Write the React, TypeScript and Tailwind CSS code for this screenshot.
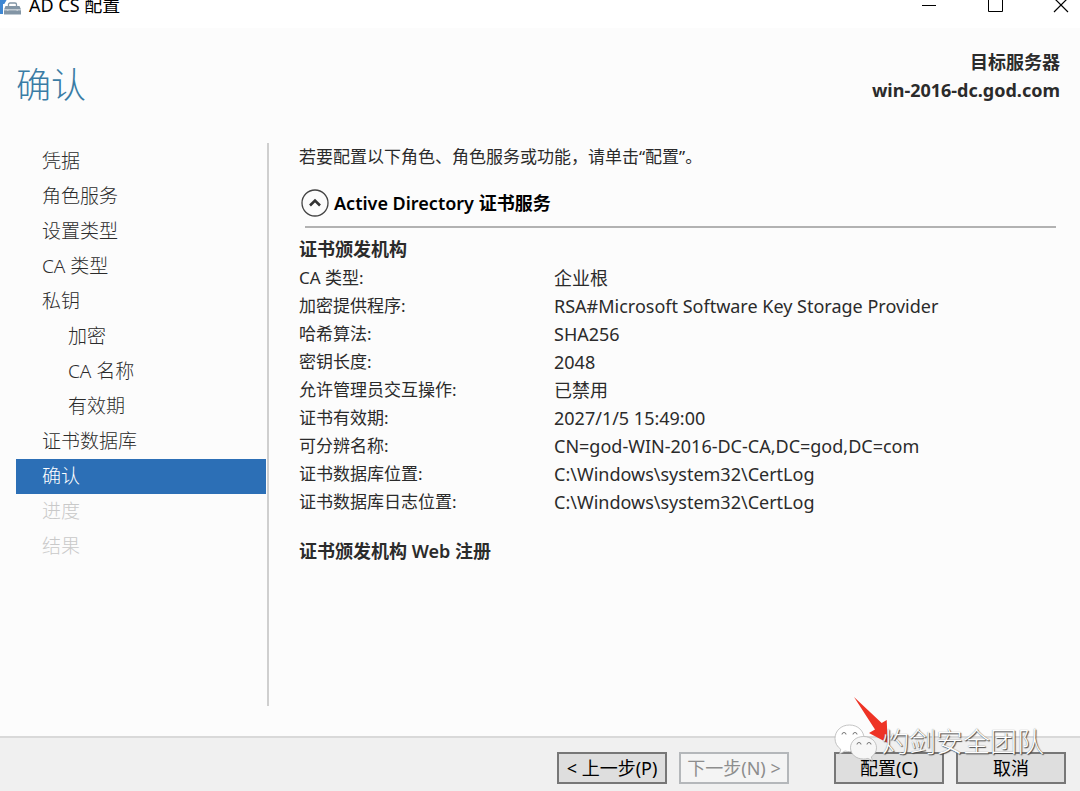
import { useState } from "react";
import clsx from "clsx";

interface IStep {
  name: string;
  nested?: boolean;
  disabled?: boolean;
}

const steps: IStep[] = [
  { name: "凭据" },
  { name: "角色服务" },
  { name: "设置类型" },
  { name: "CA 类型" },
  { name: "私钥" },
  { name: "加密", nested: true },
  { name: "CA 名称", nested: true },
  { name: "有效期", nested: true },
  { name: "证书数据库" },
  { name: "确认" },
  { name: "进度", disabled: true },
  { name: "结果", disabled: true },
];

const details = [
  ["CA 类型:", "企业根"],
  ["加密提供程序:", "RSA#Microsoft Software Key Storage Provider"],
  ["哈希算法:", "SHA256"],
  ["密钥长度:", "2048"],
  ["允许管理员交互操作:", "已禁用"],
  ["证书有效期:", "2027/1/5 15:49:00"],
  ["可分辨名称:", "CN=god-WIN-2016-DC-CA,DC=god,DC=com"],
  ["证书数据库位置:", "C:\\Windows\\system32\\CertLog"],
  ["证书数据库日志位置:", "C:\\Windows\\system32\\CertLog"],
];

function TitleBar() {
  return (
    <header className="h-7 overflow-hidden bg-white">
      <div className="-mt-4 flex h-[42px] items-center justify-between">
        <div className="flex items-center gap-2">
          <svg width="21" height="20" viewBox="0 0 21 20" aria-hidden="true">
            <path d="M0 0h9.500L4 9.500V19H0z" fill="#3f87d2" />
            <path d="M3 9h18v10.500H3z" fill="#fff" />
            <path
              d="M8.500 11V9.500A1.500 1.500 0 0 1 10 8h5a1.500 1.500 0 0 1 1.500 1.500V11"
              fill="none"
              stroke="#8295a5"
              strokeWidth="1.3"
            />
            <path d="M5.500 11h14l1.500 3.500H4zM4 15.200h17v4.300H4z" fill="#8295a5" />
            <path d="M7 14h1.500v2H7zM16.500 14H18v2h-1.500z" fill="#c3ccd4" />
          </svg>
          <span className="text-[18px] leading-6 text-black">AD CS 配置</span>
        </div>
        <div className="flex gap-10 pr-1.5 text-black">
          <button aria-label="最小化" className="p-1">
            <svg width="18" height="18" viewBox="0 0 18 18">
              <path d="M2 9.500h14" stroke="currentColor" />
            </svg>
          </button>
          <button aria-label="最大化" className="p-1">
            <svg width="18" height="18" viewBox="0 0 18 18">
              <path d="M2.500 1.500h14v14h-14z" fill="none" stroke="currentColor" />
            </svg>
          </button>
          <button aria-label="关闭" className="p-1">
            <svg width="18" height="18" viewBox="0 0 18 18">
              <path d="M2 2l14 14M16 2L2 16" stroke="currentColor" strokeWidth="1.2" />
            </svg>
          </button>
        </div>
      </div>
    </header>
  );
}

function Watermark() {
  return (
    <div className="pointer-events-none absolute -top-[41px] right-9 flex items-end">
      <svg
        className="-mr-[11px] overflow-visible"
        width="58"
        height="68"
        viewBox="0 0 58 68"
        aria-hidden="true"
      >
        <g stroke="#b5b5b5" strokeWidth="0.8">
          <path
            d="M14.500 28C6 28 0 34 0 41.500c0 4.500 2.200 8.200 5.700 10.700L4.600 57l5.400-3c1.500.4 3 .6 4.500.6C23 54.600 29 49 29 41.500S23 28 14.500 28z"
            fill="#fff"
          />
          <path
            d="M28.500 39.500c-7.500 0-13 5-13 11.300 0 6.400 5.500 11.200 13 11.200 1.500 0 3-.2 4.400-.6l4.600 2.400-1.200-3.900c3.200-2.100 5.200-5.300 5.200-9.100 0-6.300-5.500-11.300-13-11.300z"
            fill="#f7f7f7"
          />
        </g>
        <g fill="none" stroke="#777" strokeWidth="1">
          <path d="M7 37.500a2 2 0 0 1 4 0M18 37.500a2 2 0 0 1 4 0M22 47.500a2 2 0 0 1 4 0M32 47.500a2 2 0 0 1 4 0" />
        </g>
        <path d="M19 0L46.700 26 51.700 23 52.700 46 34 36l6-3.500z" fill="#ee3325" />
      </svg>
      <span className="text-[27px] leading-[46px] font-light text-white [text-shadow:1px_1px_1px_#444,0_0_1px_#777]">
        灼剑安全团队
      </span>
    </div>
  );
}

const buttonStyle =
  "h-8 w-[110px] border-2 border-[#777] bg-[#dedede] text-[18px] leading-6 whitespace-nowrap text-black disabled:border-[#b4b7ba] disabled:bg-[#f4f4f4] disabled:text-[#8d8d8d]";

export default function App() {
  const [active, setActive] = useState("确认");
  const [expanded, setExpanded] = useState(true);

  return (
    <div className="flex min-h-screen flex-col overflow-hidden bg-[#fcfcfc] font-['Noto_Sans','Noto_Sans_CJK_SC',sans-serif] text-[#2b2b2b]">
      <TitleBar />

      <div className="flex items-start justify-between px-4 pt-5">
        <h1 className="pt-3 text-[35px] leading-[50px] font-light text-[#3a7ca5]">
          确认
        </h1>
        <div className="pr-1 text-right text-[18px] leading-7 font-bold">
          <p>目标服务器</p>
          <p>win-2016-dc.god.com</p>
        </div>
      </div>

      <div className="flex grow pt-[33px] pr-6 pb-[30px] pl-4">
        <nav className="w-[253px] shrink-0 border-r-2 border-[#cfcfcf] pt-px pr-px">
          <ul>
            {steps.map((step) => (
              <li key={step.name}>
                <button
                  disabled={step.disabled}
                  onClick={() => setActive(step.name)}
                  className={clsx(
                    "h-[35px] w-full text-left text-[19px] leading-[35px] font-light disabled:text-[#c9c9c9]",
                    step.nested ? "pl-[52px]" : "pl-[26px]",
                    active === step.name && "bg-[#2c6fb6] text-white"
                  )}
                >
                  {step.name}
                </button>
              </li>
            ))}
          </ul>
        </nav>

        <main className="grow pl-[30px] text-[17px] leading-7">
          <p>若要配置以下角色、角色服务或功能，请单击“配置”。</p>

          <section>
            <h2 className="mt-[18px] ml-[6px] flex h-[39px] items-start border-b-2 border-[#b2b2b2] text-[18px] font-semibold text-black">
              <button
                aria-label="展开或折叠"
                aria-expanded={expanded}
                onClick={() => setExpanded(!expanded)}
                className="mr-[5px] -ml-1"
              >
                <svg width="28" height="28" viewBox="0 0 28 28" fill="none">
                  <circle cx="14" cy="14" r="13" stroke="#444" strokeWidth="1.3" />
                  <path d="M9 16.500l5-5 5 5" stroke="#333" strokeWidth="2.600" />
                </svg>
              </button>
              Active Directory 证书服务
            </h2>

            {expanded && (
              <div className="pt-[7px]">
                <h3 className="text-[18px] font-semibold">证书颁发机构</h3>
                <dl className="pt-px">
                  {details.map(([label, value]) => (
                    <div key={label} className="flex">
                      <dt className="w-[255px] shrink-0">{label}</dt>
                      <dd className="text-[18px]">{value}</dd>
                    </div>
                  ))}
                </dl>
                <h3 className="mt-[21px] text-[18px] font-semibold">
                  证书颁发机构 Web 注册
                </h3>
              </div>
            )}
          </section>
        </main>
      </div>

      <footer className="relative flex justify-end border-t-2 border-[#d9d9d9] bg-[#f0f0f0] pt-[14px] pr-[14px] pb-[7px]">
        <div className="flex gap-3">
          <button className={buttonStyle}>&lt; 上一步(P)</button>
          <button className={buttonStyle} disabled>
            下一步(N) &gt;
          </button>
        </div>
        <div className="ml-[45px] flex gap-3">
          <button className={buttonStyle}>配置(C)</button>
          <button className={buttonStyle}>取消</button>
        </div>
        <Watermark />
      </footer>
    </div>
  );
}
